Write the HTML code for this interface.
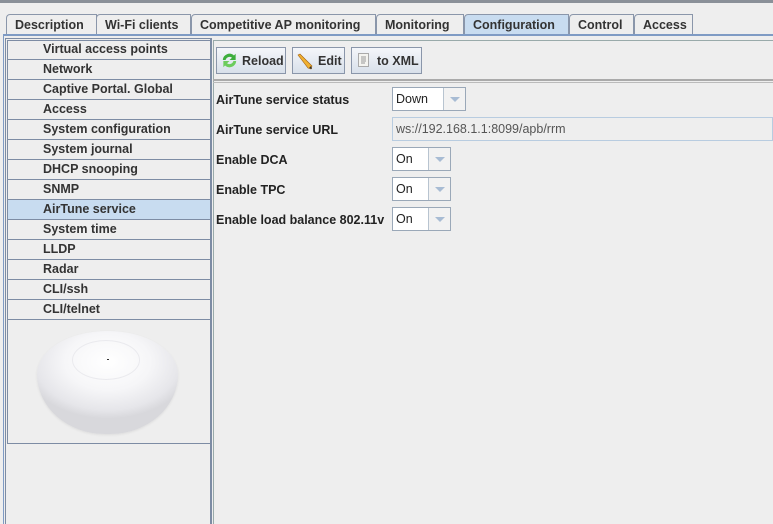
<!DOCTYPE html>
<html><head><style>
*{margin:0;padding:0;box-sizing:border-box}
body{width:773px;height:524px;background:#eeeeee;font-family:"Liberation Sans","DejaVu Sans",sans-serif;font-size:12.5px;font-weight:bold;color:#333;position:relative;overflow:hidden}
.abs{position:absolute}
.tab{position:absolute;top:14px;height:21px;border:1px solid #8a96aa;border-bottom:none;background:#eeeeee;padding-left:8px;line-height:21px;color:#333;border-top-left-radius:4px 4px}
.tab.sel{background:#c8dcf0}
.item{position:absolute;left:8px;width:202px;height:20px;border-bottom:1px solid #7d8ca4;padding-left:35px;line-height:19px;color:#333}
.item.sel{background:#c8dcf0}
.btn{position:absolute;top:47px;height:27px;border:1px solid #8a96aa;background:linear-gradient(#f4f6fa,#d8e0ea);line-height:26px;padding-left:25px;color:#333}
.lbl{position:absolute;left:216px;color:#222}
.combo{position:absolute;left:392px;height:24px;border:1px solid #9aa8b8;background:#fff;font-weight:normal;line-height:22px;padding-left:3px;color:#222}
.combo .ar{position:absolute;right:0;top:0;width:22px;height:22px;border-left:1px solid #b8c4d0;background:#f2f2f2}
.combo .ar:after{content:"";position:absolute;left:6px;top:9px;border-left:5px solid transparent;border-right:5px solid transparent;border-top:5px solid #a8bcd4}
</style></head><body>
<div class="abs" style="left:0;top:0;width:773px;height:3px;background:#8a9098"></div>
<div class="tab" style="left:6px;width:91px">Description</div>
<div class="tab" style="left:96px;width:95px">Wi-Fi clients</div>
<div class="tab" style="left:191px;width:185px">Competitive AP monitoring</div>
<div class="tab" style="left:376px;width:88px">Monitoring</div>
<div class="tab sel" style="left:464px;width:105px">Configuration</div>
<div class="tab" style="left:569px;width:65px">Control</div>
<div class="tab" style="left:634px;width:59px">Access</div>
<div class="abs" style="left:3px;top:34px;width:770px;height:2px;background:#7f9bc4"></div>
<div class="abs" style="left:3px;top:36px;width:1px;height:488px;background:#7f9bc4"></div>
<div class="abs" style="left:5px;top:38px;width:206px;height:486px;border:1px solid #7d8ca4;border-bottom:none"></div>
<div class="abs" style="left:7px;top:40px;width:204px;height:404px;border:1px solid #7d8ca4"></div>
<div class="item" style="top:40px">Virtual access points</div>
<div class="item" style="top:60px">Network</div>
<div class="item" style="top:80px">Captive Portal. Global</div>
<div class="item" style="top:100px">Access</div>
<div class="item" style="top:120px">System configuration</div>
<div class="item" style="top:140px">System journal</div>
<div class="item" style="top:160px">DHCP snooping</div>
<div class="item" style="top:180px">SNMP</div>
<div class="item sel" style="top:200px">AirTune service</div>
<div class="item" style="top:220px">System time</div>
<div class="item" style="top:240px">LLDP</div>
<div class="item" style="top:260px">Radar</div>
<div class="item" style="top:280px">CLI/ssh</div>
<div class="item" style="top:300px">CLI/telnet</div>
<div class="abs" style="left:37px;top:331px;width:141px;height:103px;border-radius:50% 50% 48% 48% / 42% 42% 58% 58%;background:radial-gradient(ellipse 60% 55% at 50% 30%,#ffffff 0%,#f6f6f8 50%,#e6e6ea 85%,#d8d8dc 100%);box-shadow:0 1px 2px #ddd"></div>
<div class="abs" style="left:72px;top:340px;width:68px;height:40px;border-radius:50%;border:1px solid #eaeaee"></div>
<div class="abs" style="left:107px;top:359px;width:2px;height:1px;background:#333"></div>
<div class="abs" style="left:211px;top:38px;width:1px;height:486px;background:#7d8ca4"></div>
<div class="abs" style="left:213px;top:40px;width:560px;height:1px;background:#9aa"></div>
<div class="abs" style="left:213px;top:40px;width:1px;height:484px;background:#9aa"></div>
<div class="btn" style="left:216px;width:70px">Reload</div>
<svg class="abs" style="left:220px;top:51px" width="19" height="19" viewBox="0 0 17 17"><path d="M2.5 8a6 6 0 0 1 10-4L14 2.5v5.5H8.5l2.2-2A3.6 3.6 0 0 0 5 8z" fill="#3dae3d"/><path d="M14.5 9a6 6 0 0 1-10 4L3 14.5V9h5.5l-2.2 2A3.6 3.6 0 0 0 12 9z" fill="#6ccc5c"/></svg>
<div class="btn" style="left:292px;width:53px">Edit</div>
<svg class="abs" style="left:296px;top:52px" width="18" height="18" viewBox="0 0 18 18"><path d="M2 3l2-1 12 12-1 3-3-1z" fill="#f0b030" stroke="#a06010" stroke-width=".6"/><path d="M13 16l3 1-1-3z" fill="#333"/></svg>
<div class="btn" style="left:351px;width:71px;padding-left:25px">to XML</div>
<svg class="abs" style="left:358px;top:53px" width="12" height="15" viewBox="0 0 12 15"><rect x=".5" y=".5" width="10" height="13" fill="#f4f4f0" stroke="#aaa"/><path d="M3 4h5M3 6h5M3 8h5M3 10h4" stroke="#999"/></svg>
<div class="abs" style="left:213px;top:79px;width:560px;height:2px;background:#aaa"></div>
<div class="abs" style="left:213px;top:82px;width:560px;height:1px;background:#bbb"></div>
<div class="lbl" style="top:93px">AirTune service status</div>
<div class="combo" style="top:87px;width:74px">Down<div class="ar"></div></div>
<div class="lbl" style="top:123px">AirTune service URL</div>
<div class="combo" style="top:117px;width:381px;border-color:#b8cce0;background:#eeeeee;color:#555">ws://192.168.1.1:8099/apb/rrm</div>
<div class="lbl" style="top:153px">Enable DCA</div>
<div class="combo" style="top:147px;width:59px">On<div class="ar"></div></div>
<div class="lbl" style="top:183px">Enable TPC</div>
<div class="combo" style="top:177px;width:59px">On<div class="ar"></div></div>
<div class="lbl" style="top:213px">Enable load balance 802.11v</div>
<div class="combo" style="top:207px;width:59px">On<div class="ar"></div></div>
</body></html>
